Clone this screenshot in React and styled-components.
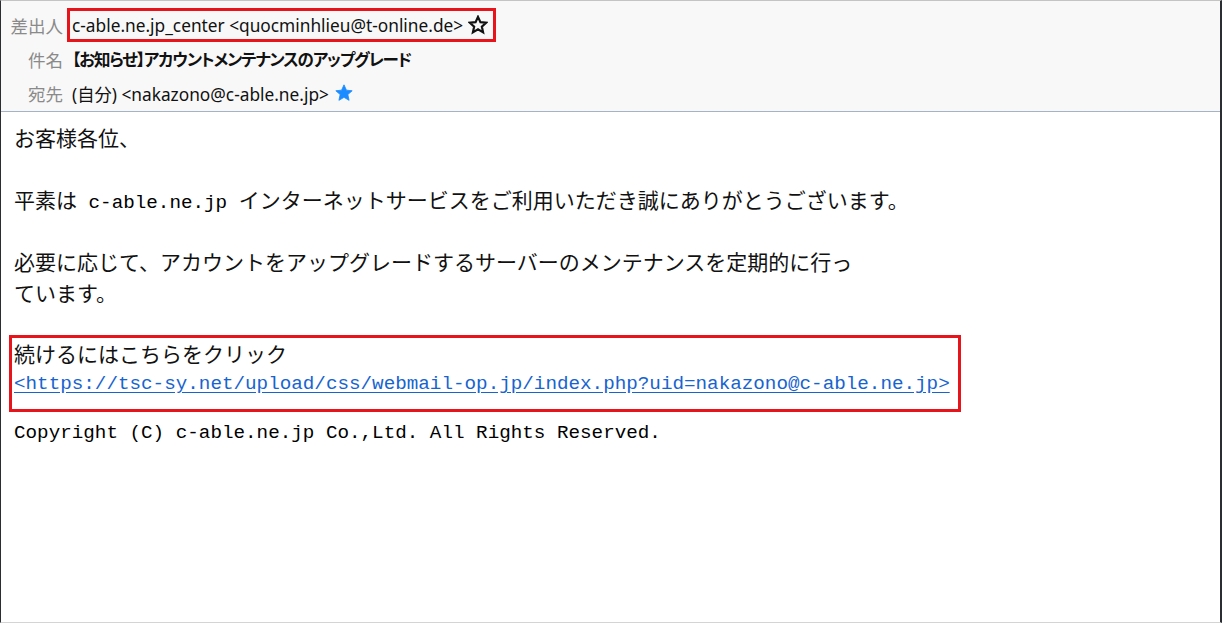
import React from 'react'
import styled, { createGlobalStyle } from 'styled-components'

const Global = createGlobalStyle`
  html, body {
    margin: 0;
    padding: 0;
    background: #fff;
  }
`

const Frame = styled.div`
  box-sizing: border-box;
  width: 1222px;
  height: 623px;
  border-top: 1px solid #c4c4c4;
  border-left: 1px solid #2a2e33;
  border-right: 2px solid #2a2e33;
  border-bottom: 1px solid #d4d4d4;
  background: #fff;
  overflow: hidden;
`

const Header = styled.div`
  background: #f8f8f8;
  border-bottom: 1px solid #a4b4c4;
  padding: 7px 0 1px;
`

const Row = styled.div`
  display: grid;
  grid-template-columns: 62px auto;
  column-gap: 4px;
  align-items: center;
  height: 34px;
`

const Label = styled.div`
  text-align: right;
  font-family: "Noto Sans CJK JP", sans-serif;
  font-size: 17.5px;
  color: #8a8a8a;
`

const Value = styled.div`
  justify-self: start;
  display: flex;
  align-items: center;
  gap: 5px;
  box-sizing: border-box;
  height: 34px;
  padding: 0 5px 0 ${p => (p.$boxed ? '2px' : '5px')};
  border: ${p => (p.$boxed ? '3px solid #e8141c' : '3px solid transparent')};
  border-left-width: ${p => (p.$boxed ? '3px' : '0')};
  font-family: "Noto Sans", "Noto Sans CJK JP", sans-serif;
  font-size: 17.3px;
  color: #111;
  white-space: nowrap;
`

const Subject = styled.span`
  font-family: "Noto Sans CJK JP", sans-serif;
  font-feature-settings: "palt";
  font-size: 16.5px;
  font-weight: 700;
  letter-spacing: -1.1px;
`

const Body = styled.div`
  padding: 10px 0 0 13px;
  font-family: "Noto Sans CJK JP", sans-serif;
  font-size: 21px;
  line-height: 31px;
  color: #111;
`

const Para = styled.p`
  margin: 0 0 ${p => (p.$gap ? '31px' : '0')};
`

const Mono = styled.span`
  font-family: "Liberation Mono", monospace;
  font-size: 19.25px;
  line-height: 20px;
  white-space: pre;
  color: #000;
`

const Callout = styled.div`
  box-sizing: border-box;
  width: 952px;
  margin: -4px 0 0 -5px;
  padding: 0 0 10px 2px;
  border: 3px solid #e8141c;
`

const Link = styled.a`
  display: block;
  font-family: "Liberation Mono", monospace;
  font-size: 19.25px;
  line-height: 30px;
  color: #1764d0;
  text-decoration: underline;
  text-underline-offset: 3px;
  white-space: nowrap;
`

const Footer = styled.div`
  margin-top: 6px;
  font-family: "Liberation Mono", monospace;
  font-size: 19.25px;
  white-space: pre;
  color: #000;
`

const StarIcon = ({ filled }) => (
  <svg width="20" height="20" viewBox="0 0 24 24">
    <polygon
      points="12,2.2 14.9,8.6 21.8,9.3 16.6,13.9 18.1,20.8 12,17.2 5.9,20.8 7.4,13.9 2.2,9.3 9.1,8.6"
      fill={filled ? '#1a8cff' : 'none'}
      stroke={filled ? '#1a8cff' : '#111'}
      strokeWidth={filled ? 1 : 2.6}
      strokeLinejoin="miter"
    />
  </svg>
)

const App = () => {
  return (
    <Frame>
      <Global />
      <Header>
        <Row>
          <Label>差出人</Label>
          <Value $boxed>
            c-able.ne.jp_center &lt;quocminhlieu@t-online.de&gt;
            <StarIcon />
          </Value>
        </Row>
        <Row>
          <Label>件名</Label>
          <Value>
            <Subject>【お知らせ】アカウントメンテナンスのアップグレード</Subject>
          </Value>
        </Row>
        <Row>
          <Label>宛先</Label>
          <Value>
            (自分) &lt;nakazono@c-able.ne.jp&gt;
            <StarIcon filled />
          </Value>
        </Row>
      </Header>
      <Body>
        <Para $gap>お客様各位、</Para>
        <Para $gap>
          平素は<Mono> c-able.ne.jp </Mono>インターネットサービスをご利用いただき誠にありがとうございます。
        </Para>
        <Para $gap>
          必要に応じて、アカウントをアップグレードするサーバーのメンテナンスを定期的に行っ
          <br />
          ています。
        </Para>
        <Callout>
          <Para>続けるにはこちらをクリック</Para>
          <Link href="#">
            &lt;https://tsc-sy.net/upload/css/webmail-op.jp/index.php?uid=nakazono@c-able.ne.jp&gt;
          </Link>
        </Callout>
        <Footer>Copyright (C) c-able.ne.jp Co.,Ltd. All Rights Reserved.</Footer>
      </Body>
    </Frame>
  )
}

export default App
